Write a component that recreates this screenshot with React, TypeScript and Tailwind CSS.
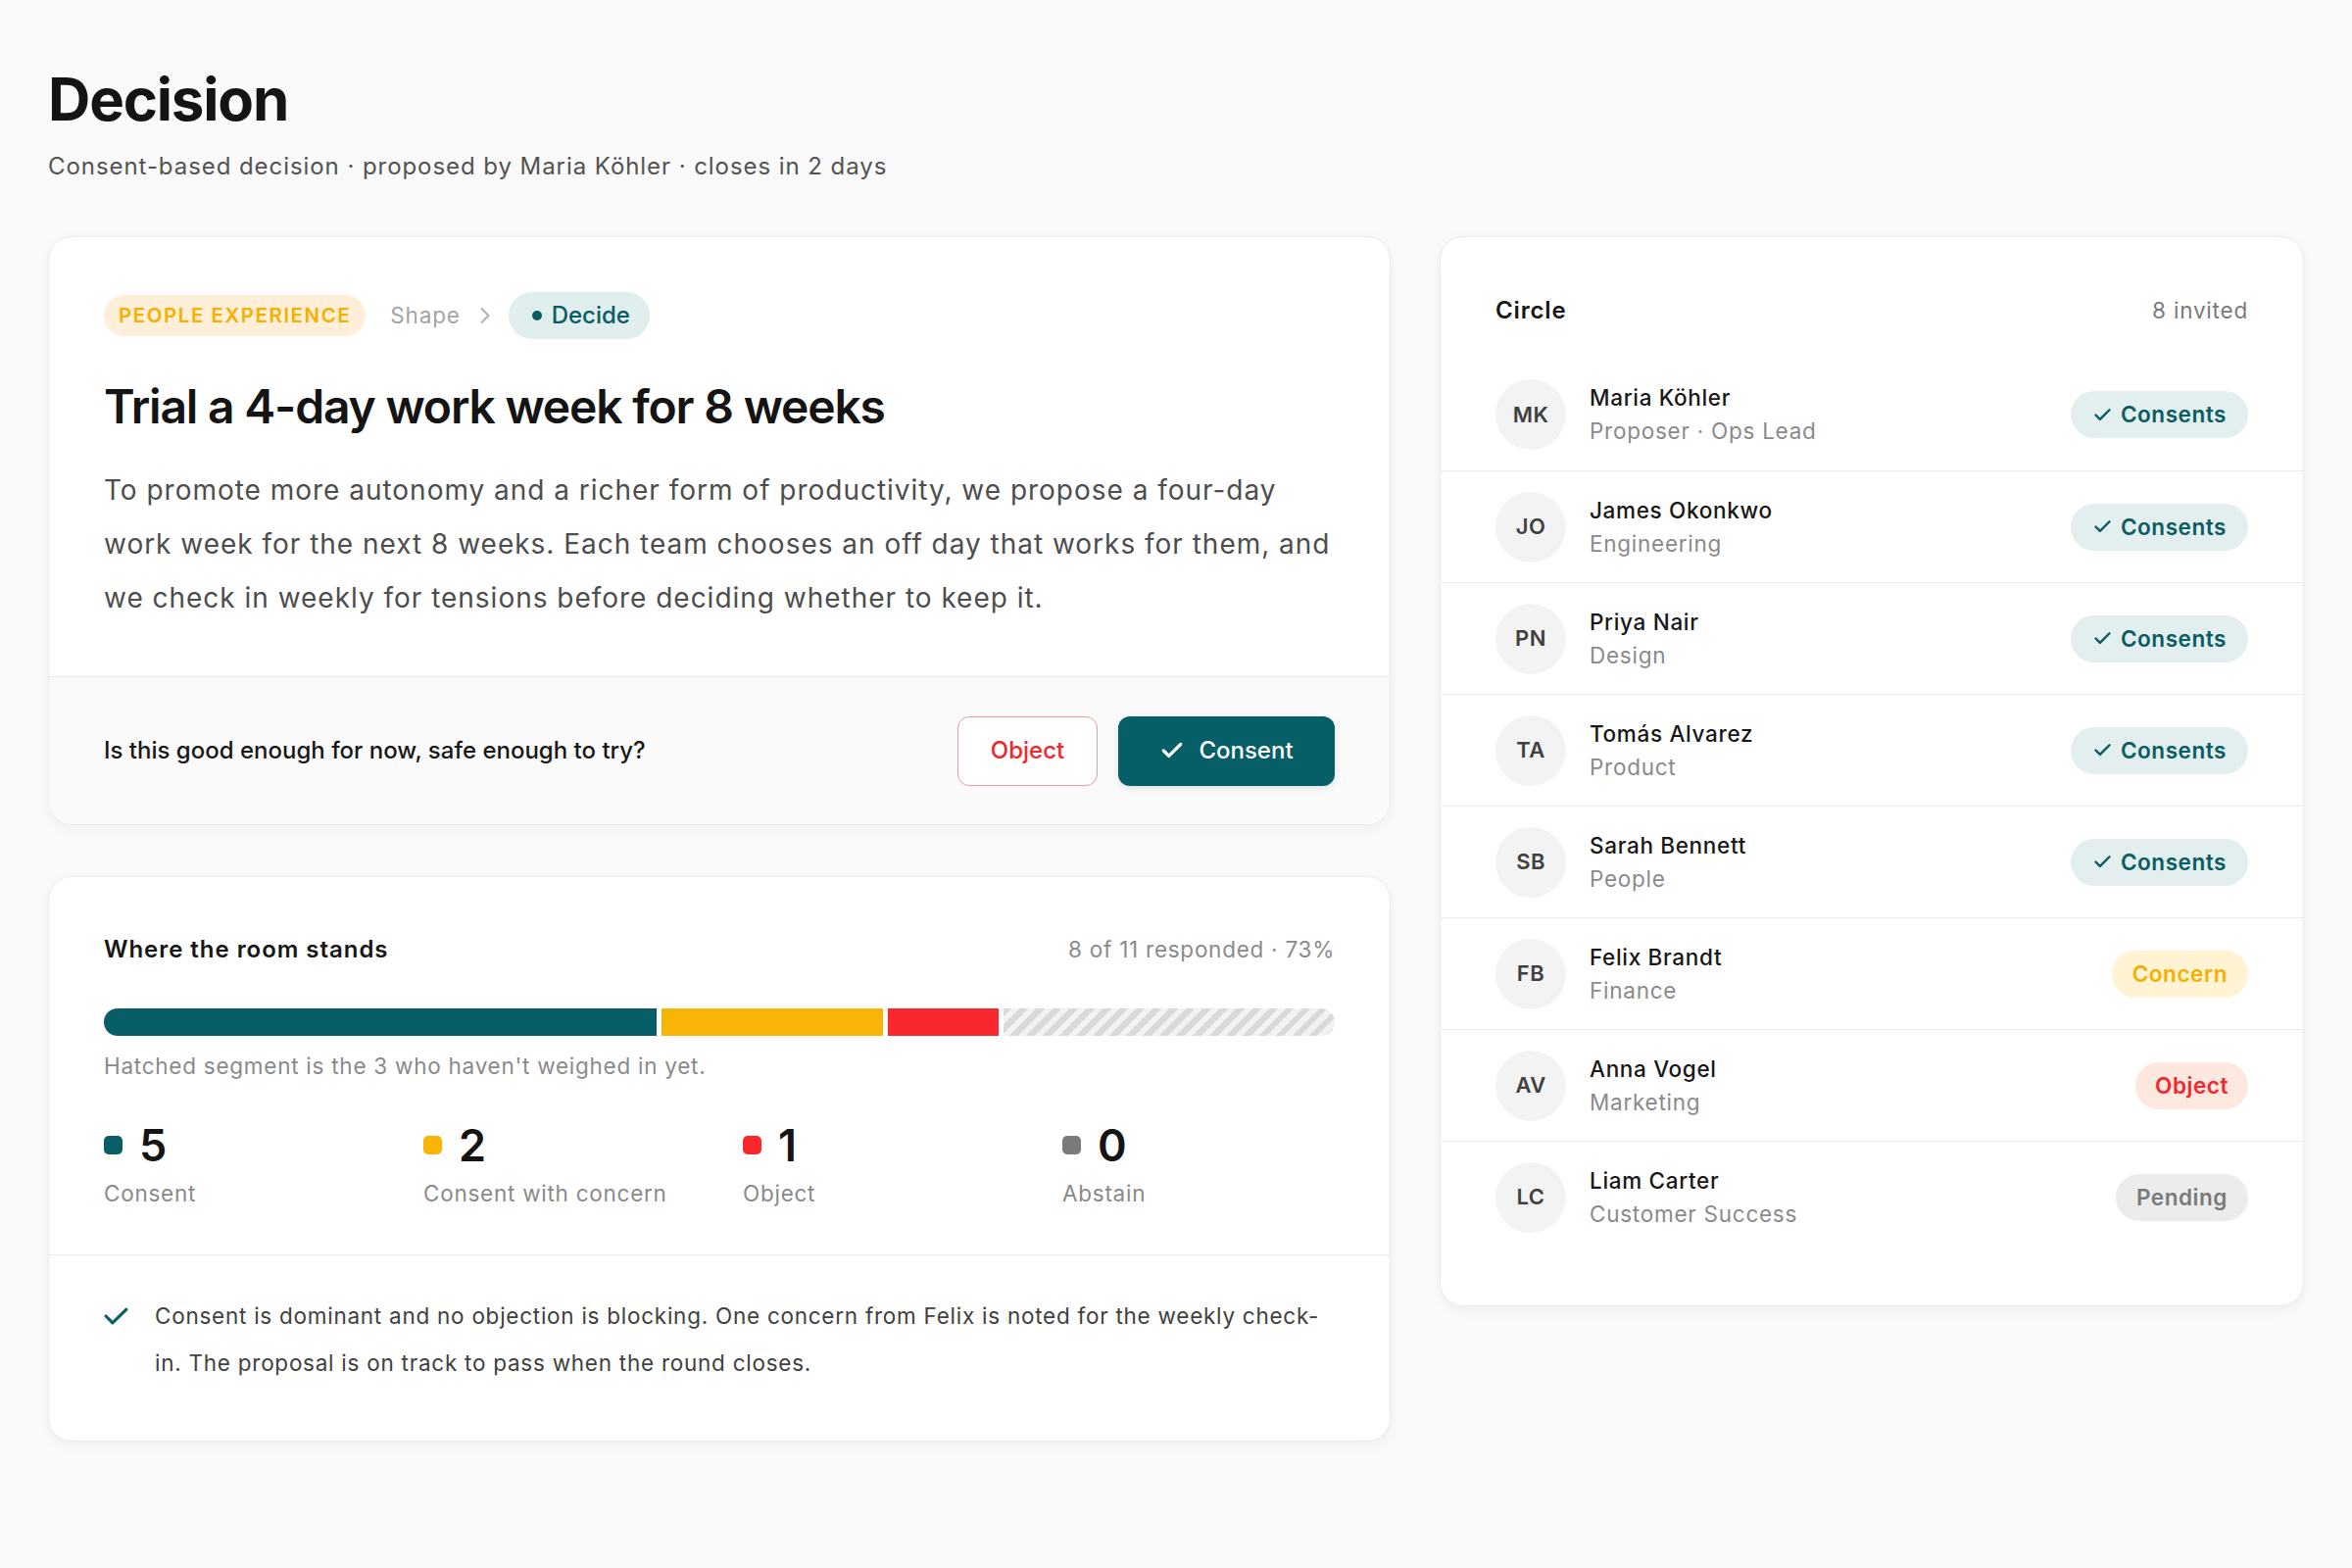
import React from "react";

const F = { fontFamily: "Inter, 'Noto Sans', sans-serif" };

function CheckIcon({ className, stroke = 3 }: { className?: string; stroke?: number }) {
  return (
    <svg viewBox="0 0 24 24" fill="none" stroke="currentColor" strokeWidth={stroke} strokeLinecap="round" strokeLinejoin="round" className={className}>
      <path d="M20 6 9 17l-5-5" />
    </svg>
  );
}

type Status = "consent" | "concern" | "object" | "pending";

const people: { i: string; name: string; role: string; s: Status }[] = [
  { i: "MK", name: "Maria Köhler", role: "Proposer · Ops Lead", s: "consent" },
  { i: "JO", name: "James Okonkwo", role: "Engineering", s: "consent" },
  { i: "PN", name: "Priya Nair", role: "Design", s: "consent" },
  { i: "TA", name: "Tomás Alvarez", role: "Product", s: "consent" },
  { i: "SB", name: "Sarah Bennett", role: "People", s: "consent" },
  { i: "FB", name: "Felix Brandt", role: "Finance", s: "concern" },
  { i: "AV", name: "Anna Vogel", role: "Marketing", s: "object" },
  { i: "LC", name: "Liam Carter", role: "Customer Success", s: "pending" },
];

function Badge({ s }: { s: Status }) {
  if (s === "consent")
    return (
      <span className="flex h-[48px] items-center gap-[8px] rounded-full bg-[#e3eeee] px-[22px] text-[22.5px] font-semibold tracking-[0.025em] text-[#0a5c63]">
        <CheckIcon className="h-[21px] w-[21px]" stroke={2.8} />
        Consents
      </span>
    );
  if (s === "concern")
    return (
      <span className="flex h-[48px] items-center rounded-full bg-[#fff3d3] px-[21px] text-[22.5px] font-semibold tracking-[0.025em] text-[#f4b000]">
        Concern
      </span>
    );
  if (s === "object")
    return (
      <span className="flex h-[48px] items-center rounded-full bg-[#fde8df] px-[20px] text-[22.5px] font-semibold tracking-[0.025em] text-[#f2262c]">
        Object
      </span>
    );
  return (
    <span className="flex h-[48px] items-center rounded-full bg-[#ececec] px-[21px] text-[22.5px] font-semibold tracking-[0.025em] text-[#7a7a7a]">
      Pending
    </span>
  );
}

const stats = [
  { n: "5", label: "Consent", c: "bg-[#075e66]" },
  { n: "2", label: "Consent with concern", c: "bg-[#f9b507]" },
  { n: "1", label: "Object", c: "bg-[#f9282e]" },
  { n: "0", label: "Abstain", c: "bg-[#7a7a7a]" },
];

export default function App() {
  return (
    <div style={F} className="min-h-[1600px] bg-[#fafafa] px-[49px] pt-[65px] text-[#171717]">
      <h1 className="text-[60px] font-bold leading-[72px] tracking-[-0.02em] text-[#141414]">Decision</h1>
      <p className="mt-[15px] text-[24px] leading-[36px] tracking-[0.039em] text-[#525252]">
        Consent-based decision · proposed by Maria Köhler · closes in 2 days
      </p>

      <div className="mt-[53px] grid grid-cols-[minmax(0,1fr)_882px] items-start gap-[50px]">
        <div className="flex flex-col gap-[52px]">
          {/* Proposal card */}
          <div className="overflow-hidden rounded-[24px] border-[1.5px] border-[#ebebeb] bg-white shadow-[0_4px_14px_rgba(0,0,0,0.05)]">
            <div className="px-[56px] pb-[52px] pt-[56px]">
              <div className="flex h-[48px] items-center">
                <span className="flex h-[42px] items-center rounded-full bg-[#ffefd8] px-[15px] text-[20.5px] font-semibold tracking-[0.075em] text-[#f5b000]">
                  PEOPLE EXPERIENCE
                </span>
                <span className="ml-[25px] text-[22.5px] tracking-[0.037em] text-[#a3a3a3]">Shape</span>
                <svg viewBox="0 0 24 24" className="ml-[11px] h-[28px] w-[28px] text-[#b3b3b3]" fill="none" stroke="currentColor" strokeWidth={1.8} strokeLinecap="round" strokeLinejoin="round">
                  <path d="m9 18 6-6-6-6" />
                </svg>
                <span className="ml-[10px] flex h-[48px] items-center gap-[10px] rounded-full bg-[#e1eeee] pl-[24px] pr-[20px] text-[24px] font-medium text-[#0a5c63]">
                  <span className="h-[10px] w-[10px] rounded-full bg-[#0a5c63]" />
                  Decide
                </span>
              </div>
              <h2 className="mt-[39px] text-[48px] font-semibold leading-[60px] tracking-[-0.025em] text-[#141414]">
                Trial a 4-day work week for 8 weeks
              </h2>
              <p className="-mr-[10px] mt-[28px] text-[28px] leading-[55px] tracking-[0.035em] text-[#4d4d4d]">
                To promote more autonomy and a richer form of productivity, we propose a four-day work week for the next 8 weeks. Each team chooses an off day that works for them, and we check in weekly for tensions before deciding whether to keep it.
              </p>
            </div>
            <div className="flex h-[151px] items-center justify-between border-t-[1.5px] border-[#ebebeb] bg-[#fafafa] px-[56px]">
              <span className="text-[24px] font-medium text-[#171717]">Is this good enough for now, safe enough to try?</span>
              <div className="flex items-center gap-[21px]">
                <button className="flex h-[71px] w-[143px] items-center justify-center rounded-[12px] border-[1.5px] border-[#f09aa0] bg-white text-[24px] font-medium text-[#f2262c]">
                  Object
                </button>
                <button className="flex h-[71px] w-[221px] items-center justify-center gap-[14px] rounded-[12px] bg-[#065e66] text-[24px] font-medium text-white shadow-[0_2px_6px_rgba(0,0,0,0.12)]">
                  <CheckIcon className="h-[26px] w-[26px]" stroke={3} />
                  Consent
                </button>
              </div>
            </div>
          </div>

          {/* Room card */}
          <div className="overflow-hidden rounded-[24px] border-[1.5px] border-[#ebebeb] bg-white shadow-[0_4px_14px_rgba(0,0,0,0.05)]">
            <div className="px-[56px] pb-[46px] pt-[56px]">
              <div className="flex items-center justify-between">
                <span className="text-[24px] font-semibold leading-[36px] tracking-[0.04em] text-[#171717]">Where the room stands</span>
                <span className="text-[22.5px] leading-[36px] tracking-[0.033em] text-[#8a8a8a]">8 of 11 responded · 73%</span>
              </div>
              <div className="mt-[42px] flex h-[28px] gap-[5px] overflow-hidden rounded-full">
                <div className="h-full bg-[#075e66]" style={{ flex: 5 }} />
                <div className="h-full bg-[#f9b507]" style={{ flex: 2 }} />
                <div className="h-full bg-[#f9282e]" style={{ flex: 1 }} />
                <div
                  className="h-full bg-[repeating-linear-gradient(135deg,#d9d9d9_0px,#d9d9d9_6px,#f2f2f2_6px,#f2f2f2_12px)]"
                  style={{ flex: 3 }}
                />
              </div>
              <p className="mt-[14px] text-[22.5px] leading-[33px] tracking-[0.033em] text-[#8a8a8a]">
                Hatched segment is the 3 who haven't weighed in yet.
              </p>
              <div className="mt-[42px] grid grid-cols-4 gap-x-[48px]">
                {stats.map((s) => (
                  <div key={s.label}>
                    <div className="flex h-[45px] items-center gap-[17px]">
                      <span className={`h-[19px] w-[19px] rounded-[5px] ${s.c}`} />
                      <span className="text-[45px] font-semibold leading-[45px] text-[#141414]">{s.n}</span>
                    </div>
                    <div className="mt-[10px] text-[22.5px] leading-[33px] tracking-[0.033em] text-[#8a8a8a]">{s.label}</div>
                  </div>
                ))}
              </div>
            </div>
            <div className="flex gap-[27px] border-t-[1.5px] border-[#ebebeb] px-[56px] pb-[55px] pt-[38px]">
              <svg viewBox="0 0 24 17" className="mt-[15px] h-[18px] w-[25px] shrink-0 text-[#075e66]" fill="none" stroke="currentColor" strokeWidth={3} strokeLinecap="round" strokeLinejoin="round">
                <path d="M2 8.5 8.5 15 22 2" />
              </svg>
              <p className="text-[22.5px] leading-[48px] tracking-[0.033em] text-[#404040]">
                Consent is dominant and no objection is blocking. One concern from Felix is noted for the weekly check-in. The proposal is on track to pass when the round closes.
              </p>
            </div>
          </div>
        </div>

        {/* Circle card */}
        <div className="overflow-hidden rounded-[24px] border-[1.5px] border-[#ebebeb] bg-white pb-[54px] shadow-[0_4px_14px_rgba(0,0,0,0.05)]">
          <div className="flex items-center justify-between px-[56px] pb-[31px] pt-[56px]">
            <span className="text-[24px] font-semibold leading-[37px] tracking-[0.035em] text-[#171717]">Circle</span>
            <span className="text-[22.5px] tracking-[0.035em] text-[#7a7a7a]">8 invited</span>
          </div>
          {people.map((p, idx) => (
            <div
              key={p.i}
              className={`flex h-[114px] items-center px-[56px] ${idx > 0 ? "border-t-[1.5px] border-[#ebebeb]" : ""}`}
            >
              <div className="flex h-[72px] w-[72px] shrink-0 items-center justify-center rounded-full bg-[#f3f3f3] text-[22px] font-semibold tracking-[0.02em] text-[#404040]">
                {p.i}
              </div>
              <div className="ml-[24px] flex-1">
                <div className="text-[22.5px] font-medium leading-[34px] tracking-[0.03em] text-[#171717]">{p.name}</div>
                <div className="text-[22.5px] leading-[34px] tracking-[0.033em] text-[#8a8a8a]">{p.role}</div>
              </div>
              <Badge s={p.s} />
            </div>
          ))}
        </div>
      </div>
    </div>
  );
}
